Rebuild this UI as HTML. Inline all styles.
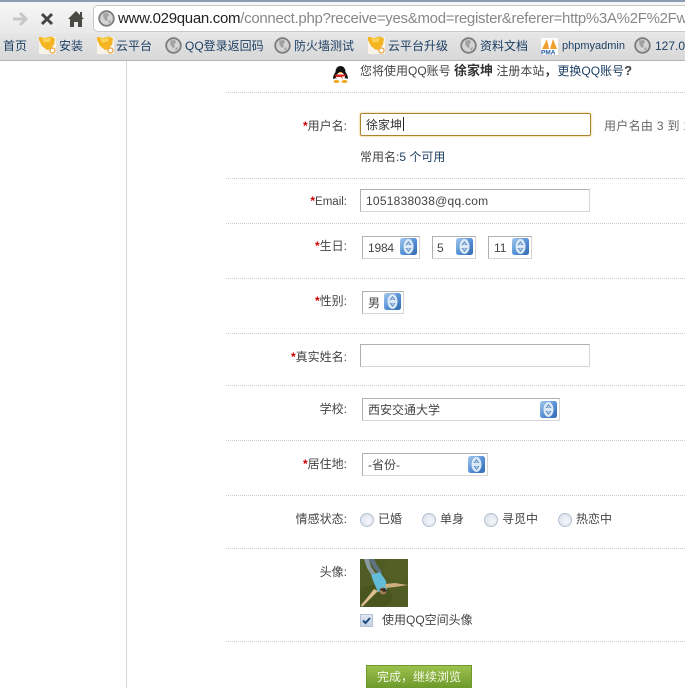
<!DOCTYPE html>
<html lang="zh">
<head>
<meta charset="utf-8">
<title>注册</title>
<style>
html,body{margin:0;padding:0;background:#fff;overflow:hidden;}
#p{position:relative;width:685px;height:688px;overflow:hidden;font-family:"Liberation Sans","WenQuanYi Zen Hei","Noto Sans CJK SC",sans-serif;font-size:12px;color:#444;background:#fff;}
#p>*{position:absolute;}
.t{white-space:nowrap;line-height:16px;}
.l{width:120px;left:227px;text-align:right;white-space:nowrap;line-height:16px;color:#444;}
.l b{color:#c00;font-weight:bold;}
.d{left:226px;width:459px;height:0;border-top:1px dotted #ccc;}
.b{color:#1d3f63;white-space:nowrap;line-height:16px;}
.i{box-sizing:border-box;background:#fff;border:1px solid #d6d6d6;border-top-color:#b0b0b0;border-left-color:#b0b0b0;}
.s{box-sizing:border-box;background:#fff;border:1px solid #d6d6d6;border-top-color:#b0b0b0;border-left-color:#b0b0b0;height:23px;}
.a{width:17px;height:17px;}
.r{width:12px;height:12px;border-radius:50%;border:1px solid #b3c0ce;background:radial-gradient(circle at 60% 60%,#f5f7fa,#d5dde9);}
.g{width:17px;height:17px;}
.q{width:19px;height:18px;}
</style>
</head>
<body>
<svg width="0" height="0" style="position:absolute;left:0;top:0">
  <defs>
    <linearGradient id="ab" x1="0" y1="0" x2="1" y2="1"><stop offset="0" stop-color="#a5c9ee"/><stop offset=".5" stop-color="#5a93d6"/><stop offset="1" stop-color="#2f69b2"/></linearGradient>
    <symbol id="arr" viewBox="0 0 17 17">
      <rect x="0" y="0" width="17" height="17" rx="2.500" fill="url(#ab)"/>
      <ellipse cx="8.500" cy="8.500" rx="5" ry="7.500" fill="#dbe8f6"/>
      <path d="M8.500 3L11.500 7H5.500zM8.500 14L11.500 10H5.500z" fill="#5d8fc4"/>
      <path d="M8.500 5L10 6.500H7zM8.500 12L10 10.500H7z" fill="#e8f0f9"/>
    </symbol>
    <symbol id="glb" viewBox="0 0 17 17">
      <circle cx="8.500" cy="8.500" r="7.300" fill="#d4d4d4" stroke="#7c7c7c" stroke-width="1.800"/>
      <path d="M5 3.500l5-.5 1 2.500-2 2 1 2.500-2 1-2.500-3zM10.500 11l2.500-1-1 3-1.500 .5z" fill="#a2a2a2"/>
    </symbol>
    <symbol id="bell" viewBox="0 0 19 18">
      <rect x="1" y="1" width="17" height="17" fill="#f7f3e8"/>
      <path d="M1 1l2 0 4 1 6-1.500 4 2-1 6-4 5-3 .5-5-4-3-6z" fill="#f5b421"/>
      <path d="M4 2l4 1 5-1.500-1 4-6 1z" fill="#fbd45a"/>
      <circle cx="14.500" cy="14.500" r="2.500" fill="#fff" stroke="#eda23a" stroke-width="1.200"/>
    </symbol>
  </defs>
</svg>
<div id="p">
  <!-- chrome -->
  <div style="left:0;top:0;width:685px;height:2px;background:#8b9bb0"></div>
  <div style="left:0;top:2px;width:685px;height:31px;background:linear-gradient(#f7f7f7,#e9e9e9)"></div>
  <div style="left:0;top:33px;width:685px;height:27px;background:linear-gradient(#e6e6e6,#d8d8d8)"></div>
  <div style="left:0;top:60px;width:685px;height:1px;background:#b4b4b4"></div>
  <svg style="left:10px;top:8px" width="80" height="22" viewBox="0 0 80 22">
    <path d="M3 11H15M10 5l6 6-6 6" fill="none" stroke="#c8c8c8" stroke-width="3"/>
    <path d="M32 6L42 16M42 6L32 16" fill="none" stroke="#444" stroke-width="3"/>
    <path d="M58 11l8-8 4 4v-3h2v5l2 2h-2v8h-4v-5h-4v5h-4v-8z" fill="#4a4a45"/>
  </svg>
  <div style="left:93px;top:5px;width:600px;height:27px;box-sizing:border-box;background:#fff;border:1px solid #c8c8c8;border-radius:5px"></div>
  <svg class="g" style="left:98px;top:10px"><use href="#glb"/></svg>
  <div class="t" style="left:118px;top:10px;font-size:15px;line-height:18px;color:#888;letter-spacing:-.3px"><span style="color:#222">www.029quan.com</span>/connect.php?receive=yes&amp;mod=register&amp;referer=http%3A%2F%2Fwww</div>

  <div class="b" style="left:3px;top:38px">首页</div>
  <svg class="q" style="left:38px;top:36px"><use href="#bell"/></svg>
  <div class="b" style="left:59px;top:38px">安装</div>
  <svg class="q" style="left:96px;top:36px"><use href="#bell"/></svg>
  <div class="b" style="left:116px;top:38px">云平台</div>
  <svg class="g" style="left:165px;top:37px"><use href="#glb"/></svg>
  <div class="b" style="left:185px;top:38px">QQ登录返回码</div>
  <svg class="g" style="left:274px;top:37px"><use href="#glb"/></svg>
  <div class="b" style="left:294px;top:38px">防火墙测试</div>
  <svg class="q" style="left:367px;top:36px"><use href="#bell"/></svg>
  <div class="b" style="left:388px;top:38px">云平台升级</div>
  <svg class="g" style="left:460px;top:37px"><use href="#glb"/></svg>
  <div class="b" style="left:480px;top:38px">资料文档</div>
  <svg style="left:541px;top:38px" width="17" height="17" viewBox="0 0 17 17"><rect width="17" height="17" fill="#fff"/><path d="M1 11L6 1l2 10zM9 11l3-10 4 10z" fill="#f0a030"/><text x="0" y="16.500" font-size="6.500" font-weight="bold" fill="#245a9a" font-family="Liberation Sans">PMA</text></svg>
  <div class="b" style="left:562px;top:38px;font-size:11px">phpmyadmin</div>
  <svg class="g" style="left:634px;top:37px"><use href="#glb"/></svg>
  <div class="b" style="left:655px;top:38px">127.0.0.1</div>

  <!-- sidebar line -->
  <div style="left:126px;top:61px;width:1px;height:627px;background:#d8d8d8"></div>

  <!-- QQ notice -->
  <svg style="left:332px;top:66px" width="17" height="17" viewBox="0 0 17 17">
    <ellipse cx="8.500" cy="5.500" rx="5" ry="5.500" fill="#111"/>
    <path d="M3.500 6c-2 3-3 6-2 7l2-1c1 2 9 2 10 0l2 1c1-1 0-4-2-7z" fill="#111"/>
    <ellipse cx="8.500" cy="11" rx="4.500" ry="4.500" fill="#fff"/>
    <path d="M3 8.500h11l-1 2H10l1 3-2-2.500H3.500z" fill="#d8261c"/>
    <path d="M6.500 6h4l-2 1.500z" fill="#f2b01e"/>
    <ellipse cx="4.500" cy="15.500" rx="3" ry="1.500" fill="#f2a51e"/>
    <ellipse cx="12.500" cy="15.500" rx="3" ry="1.500" fill="#f2a51e"/>
  </svg>
  <div class="t" style="left:360px;top:63px">您将使用QQ账号 <b style="color:#333;font-size:13px">徐家坤</b> 注册本站<b style="color:#333;margin:0 1px 0 0">，</b><span style="color:#1d3f63">更换QQ账号</span><b style="font-size:13px">?</b></div>
  <div class="d" style="top:92px"></div>

  <!-- username -->
  <div class="l" style="top:118px"><b>*</b>用户名:</div>
  <div style="left:360px;top:113px;width:231px;height:23px;box-sizing:border-box;border:1px solid #a88530;border-radius:2px;box-shadow:0 0 2px #e8b850;background:#fff"></div>
  <div class="t" style="left:366px;top:117px;color:#333">徐家坤</div>
  <div style="left:403px;top:117px;width:1px;height:14px;background:#222"></div>
  <div class="t" style="left:604px;top:118px;color:#666;letter-spacing:.3px">用户名由 3 到 15</div>
  <div class="t" style="left:360px;top:149px;color:#444">常用名:<span style="color:#1d3f63">5 个可用</span></div>
  <div class="d" style="top:178px"></div>

  <!-- email -->
  <div class="l" style="top:193px"><b>*</b><span style="font-size:11.500px">Email:</span></div>
  <div class="i" style="left:360px;top:189px;width:230px;height:23px"></div>
  <div class="t" style="left:366px;top:193px;font-size:12px;color:#444;letter-spacing:.24px">1051838038@qq.com</div>
  <div class="d" style="top:223px"></div>

  <!-- birthday -->
  <div class="l" style="top:238px"><b>*</b>生日:</div>
  <div class="s" style="left:362px;top:236px;width:58px"></div>
  <div class="t" style="left:368px;top:240px;letter-spacing:-.2px">1984</div>
  <svg class="a" style="left:400px;top:238px"><use href="#arr"/></svg>
  <div class="s" style="left:432px;top:236px;width:44px"></div>
  <div class="t" style="left:437px;top:240px">5</div>
  <svg class="a" style="left:456px;top:238px"><use href="#arr"/></svg>
  <div class="s" style="left:488px;top:236px;width:44px"></div>
  <div class="t" style="left:494px;top:240px">11</div>
  <svg class="a" style="left:512px;top:238px"><use href="#arr"/></svg>
  <div class="d" style="top:278px"></div>

  <!-- gender -->
  <div class="l" style="top:293px"><b>*</b>性别:</div>
  <div class="s" style="left:362px;top:291px;width:42px"></div>
  <div class="t" style="left:368px;top:295px">男</div>
  <svg class="a" style="left:384px;top:293px"><use href="#arr"/></svg>
  <div class="d" style="top:333px"></div>

  <!-- real name -->
  <div class="l" style="top:349px"><b>*</b>真实姓名:</div>
  <div class="i" style="left:360px;top:344px;width:230px;height:23px"></div>
  <div class="d" style="top:385px"></div>

  <!-- school -->
  <div class="l" style="top:401px">学校:</div>
  <div class="s" style="left:362px;top:398px;width:198px"></div>
  <div class="t" style="left:368px;top:402px">西安交通大学</div>
  <svg class="a" style="left:540px;top:401px"><use href="#arr"/></svg>
  <div class="d" style="top:440px"></div>

  <!-- residence -->
  <div class="l" style="top:456px"><b>*</b>居住地:</div>
  <div class="s" style="left:362px;top:453px;width:126px"></div>
  <div class="t" style="left:368px;top:457px">-省份-</div>
  <svg class="a" style="left:468px;top:456px"><use href="#arr"/></svg>
  <div class="d" style="top:495px"></div>

  <!-- relationship -->
  <div class="l" style="top:511px">情感状态:</div>
  <div class="r" style="left:360px;top:513px"></div>
  <div class="t" style="left:378px;top:511px">已婚</div>
  <div class="r" style="left:422px;top:513px"></div>
  <div class="t" style="left:440px;top:511px">单身</div>
  <div class="r" style="left:484px;top:513px"></div>
  <div class="t" style="left:502px;top:511px">寻觅中</div>
  <div class="r" style="left:558px;top:513px"></div>
  <div class="t" style="left:576px;top:511px">热恋中</div>
  <div class="d" style="top:548px"></div>

  <!-- avatar -->
  <div class="l" style="top:564px">头像:</div>
  <svg style="left:360px;top:559px" width="48" height="48" viewBox="0 0 48 48">
    <rect width="48" height="48" fill="#4f5c24"/>
    <ellipse cx="14" cy="38" rx="18" ry="12" fill="#48551f"/>
    <ellipse cx="38" cy="10" rx="14" ry="12" fill="#545f26"/>
    <path d="M4 0l3 9 5 8 4-2-5-7L9 0z" fill="#8a9aa2"/>
    <path d="M9 0l4 8 6 7 3-2-5-7-3-6z" fill="#5f7280"/>
    <path d="M11 16l9-3 6 9 1 9-9 2-4-9z" fill="#62bcd8"/>
    <path d="M25 25l10-1 13 2-13 2-9 1z" fill="#cfae80"/>
    <path d="M14 30l4 2L8 42l-6 6-1-2 6-7z" fill="#dcbd8e"/>
    <circle cx="23" cy="32" r="3.500" fill="#a07c58"/>
    <path d="M19 30l6-1 2 3-3 1z" fill="#3a3024"/>
  </svg>
  <div style="left:360px;top:614px;width:13px;height:13px;box-sizing:border-box;background:linear-gradient(#dfe7f1,#c5d3e3);border:1px solid #b3c2d3"></div>
  <svg style="left:360px;top:614px" width="13" height="13" viewBox="0 0 13 13"><path d="M3 6.500l2.500 2.500L10 4" fill="none" stroke="#1d4a80" stroke-width="2"/></svg>
  <div class="t" style="left:382px;top:612px">使用QQ空间头像</div>
  <div class="d" style="top:641px"></div>

  <!-- button -->
  <div style="left:366px;top:665px;width:106px;height:23px;box-sizing:border-box;border:1px solid #6d9a2a;background:linear-gradient(#9cc04d,#6e9c2c);color:#f4f8e8;text-align:center;line-height:22px;white-space:nowrap">完成，继续浏览</div>
</div>
</body>
</html>
